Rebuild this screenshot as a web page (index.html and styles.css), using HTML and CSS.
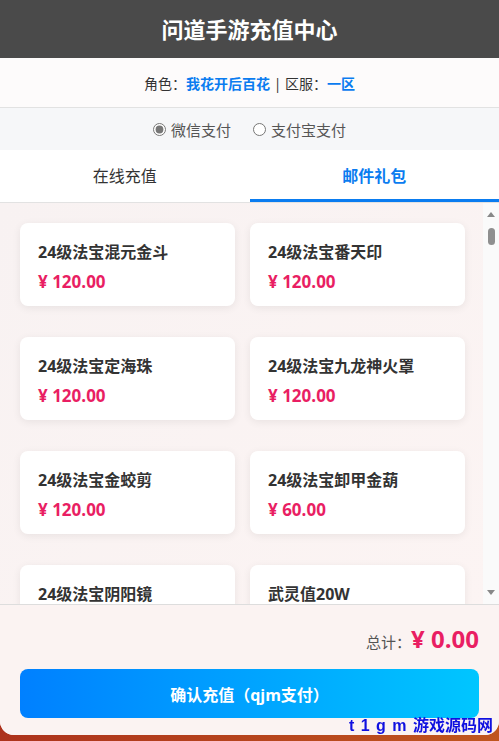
FILE: index.html
```html
<!DOCTYPE html>
<html lang="zh-CN">
<head>
  <meta charset="UTF-8" />
  <title>问道手游充值中心</title>
  <link rel="stylesheet" href="styles.css">
</head>
<body>
  <div class="container">
    <div class="header">问道手游充值中心</div>

    <div class="info">
      角色：<span class="hl">我花开后百花</span> | 区服：<span class="hl">一区</span>
    </div>

    <div class="pay-type">
      <label><input type="radio" name="pay" checked> 微信支付</label>
      <label><input type="radio" name="pay"> 支付宝支付</label>
    </div>

    <div class="tabs">
      <div class="tab">在线充值</div>
      <div class="tab active">邮件礼包</div>
    </div>

    <div class="list-wrap">
      <div class="list">
        <div class="card">
          <div class="name">24级法宝混元金斗</div>
          <div class="price">¥ 120.00</div>
        </div>
        <div class="card">
          <div class="name">24级法宝番天印</div>
          <div class="price">¥ 120.00</div>
        </div>
        <div class="card">
          <div class="name">24级法宝定海珠</div>
          <div class="price">¥ 120.00</div>
        </div>
        <div class="card">
          <div class="name">24级法宝九龙神火罩</div>
          <div class="price">¥ 120.00</div>
        </div>
        <div class="card">
          <div class="name">24级法宝金蛟剪</div>
          <div class="price">¥ 120.00</div>
        </div>
        <div class="card">
          <div class="name">24级法宝卸甲金葫</div>
          <div class="price">¥ 60.00</div>
        </div>
        <div class="card">
          <div class="name">24级法宝阴阳镜</div>
          <div class="price">¥ 120.00</div>
        </div>
        <div class="card">
          <div class="name">武灵值20W</div>
          <div class="price">¥ 200.00</div>
        </div>
        <div class="card">
          <div class="name">仙魔点10W</div>
          <div class="price">¥ 100.00</div>
        </div>
        <div class="card">
          <div class="name">超级神兽</div>
          <div class="price">¥ 300.00</div>
        </div>
      </div>
      <div class="scrollbar">
        <span class="arrow up"></span>
        <span class="thumb"></span>
        <span class="track"></span>
        <span class="arrow down"></span>
      </div>
    </div>

    <div class="footer">
      <div class="total">总计：<span class="amount">¥ 0.00</span></div>
      <button class="confirm">确认充值（qjm支付）</button>
    </div>
  </div>

  <div class="mark">t 1 g m <span class="mark-cn">游戏源码网</span></div>
</body>
</html>
```
FILE: styles.css
```css
* {
  box-sizing: border-box;
}

body {
  margin: 0;
  padding-bottom: 6px;
  font-family: "Open Sans", "Noto Sans CJK SC", sans-serif;
  background: linear-gradient(160deg, #c8406a 0%, #a82a1c 75%, #c0561e 100%);
  color: #333;
}

.container {
  height: 735px;
  display: flex;
  flex-direction: column;
  background: #fbf4f3;
  border-radius: 0 0 14px 14px;
  overflow: hidden;
}

.header {
  height: 58px;
  line-height: 58px;
  background: #4a4a4a;
  color: #fff;
  text-align: center;
  font-size: 22px;
  font-weight: bold;
}

.info {
  height: 50px;
  line-height: 52px;
  text-align: center;
  font-size: 14px;
  color: #333;
  background: #fdfbfb;
  border-bottom: 1px solid #e2e2e2;
}

.hl {
  color: #0a7cf0;
  font-weight: bold;
}

.pay-type {
  height: 42px;
  display: flex;
  justify-content: center;
  align-items: center;
  gap: 22px;
  background: #f6f7f9;
  font-size: 15px;
  color: #555;
}

.pay-type label {
  display: flex;
  align-items: center;
  gap: 5px;
}

.pay-type input {
  margin: 0;
  width: 13px;
  height: 13px;
  accent-color: #777;
}

.tabs {
  display: flex;
  background: #fff;
  border-bottom: 1px solid #e2e2e2;
}

.tab {
  flex: 1;
  height: 52px;
  line-height: 52px;
  text-align: center;
  font-size: 16px;
  color: #333;
  border-bottom: 3px solid transparent;
}

.tab.active {
  color: #0a7cf0;
  font-weight: bold;
  border-bottom-color: #0a7cf0;
}

.list-wrap {
  flex: 1;
  min-height: 0;
  display: flex;
  background: linear-gradient(135deg, #f8f2f2, #fcf4f3);
}

.list {
  flex: 1;
  overflow: hidden;
  display: grid;
  grid-template-columns: 1fr 1fr;
  grid-auto-rows: 83px;
  column-gap: 15px;
  row-gap: 31px;
  padding: 20px 18px 20px 20px;
}

.scrollbar {
  width: 16px;
  display: flex;
  flex-direction: column;
  align-items: center;
  background: #fafafa;
}

.arrow {
  width: 0;
  height: 0;
  border-left: 4px solid transparent;
  border-right: 4px solid transparent;
}

.arrow.up {
  margin-top: 9px;
  border-bottom: 5px solid #888;
}

.arrow.down {
  margin-bottom: 9px;
  border-top: 5px solid #888;
}

.thumb {
  width: 7px;
  height: 17px;
  margin-top: 11px;
  border-radius: 4px;
  background: #8f8f8f;
}

.track {
  flex: 1;
}

.card {
  background: #fff;
  border-radius: 8px;
  padding: 17px 18px;
  box-shadow: 0 2px 8px rgba(0, 0, 0, 0.07);
}

.name {
  font-size: 16px;
  font-weight: bold;
  color: #333;
  line-height: 24px;
}

.price {
  margin-top: 6px;
  font-size: 17px;
  font-weight: bold;
  color: #e91e63;
  line-height: 23px;
}

.footer {
  border-top: 1px solid #ddd;
  padding: 18px 20px 17px;
  background: #fbf3f2;
}

.total {
  text-align: right;
  font-size: 15px;
  color: #555;
  height: 32px;
  line-height: 32px;
}

.amount {
  font-size: 24px;
  font-weight: bold;
  color: #e91e63;
}

.confirm {
  display: block;
  width: 100%;
  height: 49px;
  margin-top: 14px;
  border: none;
  border-radius: 8px;
  background: linear-gradient(90deg, #0080ff, #00c6ff);
  color: #fff;
  font-family: inherit;
  font-size: 16px;
  font-weight: bold;
  cursor: pointer;
}

.mark {
  position: fixed;
  right: 6px;
  bottom: 5px;
  font-family: "Liberation Sans", "Noto Sans CJK SC", sans-serif;
  font-size: 16px;
  line-height: 20px;
  font-weight: bold;
  color: #1010e0;
  letter-spacing: 1px;
  white-space: pre;
}

.mark-cn {
  letter-spacing: 0;
}
```
